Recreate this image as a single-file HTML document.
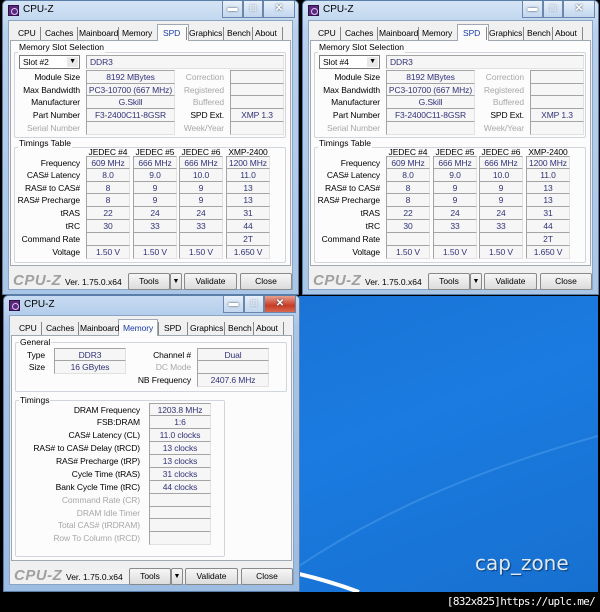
<!DOCTYPE html>
<html><head><meta charset="utf-8"><style>
*{margin:0;padding:0;box-sizing:border-box}
body{width:600px;height:612px;background:#000;position:relative;overflow:hidden;font-family:"Liberation Sans",sans-serif;font-size:8.5px}
.w{position:absolute;width:300px;height:296px}
.fr{position:absolute;left:2px;top:0;width:297px;height:295px;background:linear-gradient(#d4e4f5,#b8d0eb 30px,#aac6e6);border:1px solid #5a7ea8;border-radius:5px 5px 0 0}
.cl{position:absolute;left:8px;top:20px;width:285px;height:270px;background:#f0f0f0;border:1px solid #8aa4c4}
.pn{position:absolute;left:10px;top:40px;width:281px;height:226px;background:#fcfcfc;border:1px solid #a0a8b4}
.g{position:absolute;border:1px solid #d0d6dc;border-radius:2px}
.gl{position:absolute;background:#fcfcfc;padding:0 1px;font-size:8.5px;line-height:11px;color:#000}
.t{position:absolute;font-size:8.5px;line-height:14px;height:14px;white-space:nowrap;color:#000;letter-spacing:-0.1px}
.r{text-align:right}
.d{color:#a8a8a8}
.b{position:absolute;height:14px;border:1px solid;border-color:#a4a4a4 #e2e2e2 #e2e2e2 #a4a4a4;background:#f6f6f6;color:#32327a;text-align:center;font-size:8.5px;line-height:12px;white-space:nowrap;letter-spacing:-0.1px;overflow:hidden}
.tab{position:absolute;top:27px;font-size:8.5px;line-height:12px;color:#000;letter-spacing:-0.1px}
.sep{position:absolute;top:27px;width:1px;height:13px;background:#888}
.act{position:absolute;top:24px;height:17px;background:#fcfcfc;border:1px solid #a0a8b4;border-bottom:none}
.btn{position:absolute;top:273px;height:17px;border:1px solid #8a8a8a;background:linear-gradient(#f6f6f6,#dcdcdc);font-size:8.5px;line-height:15px;text-align:center;border-radius:2px}
.ttl{position:absolute;left:23px;top:4px;font-size:10px;color:#000}
.ico{position:absolute;left:8px;top:5px;width:11px;height:11px;background:#5a2a7a;border:1px solid #30104a}
.ico:after{content:"";position:absolute;left:2px;top:2px;width:5px;height:5px;border-radius:50%;border:1px solid #e0c0ff}
.cb{position:absolute;top:1px;height:17px;border:1px solid #6a86aa;border-top:none;background:linear-gradient(#e8f0fa,#c2d6ee);font-size:10px;text-align:center;line-height:15px;color:#fff;font-weight:bold;text-shadow:0 0 2px #345}
.logo{position:absolute;left:13px;top:272px;font-size:15px;font-style:italic;color:#a0a0a0;font-weight:bold;letter-spacing:0.5px}
.ver{position:absolute;left:65px;top:277px;font-size:8.5px}
</style></head><body>

<div style="position:absolute;left:299px;top:296px;width:299px;height:296px;background:linear-gradient(160deg,#1a74d6,#1b7be0 40%,#1670d0);overflow:hidden">
<svg width="299" height="296" style="position:absolute;left:0;top:0"><path d="M0 270 Q120 190 299 140" stroke="#5aa8f0" stroke-width="2" fill="none" opacity="0.4"/><path d="M0 278 Q30 285 60 296" stroke="#fff" stroke-width="4" fill="none"/></svg>
<div style="position:absolute;left:176px;top:255px;font-size:20px;color:#dfe8f4;font-family:'DejaVu Sans',sans-serif;text-shadow:1px 1px 1px #0a3a70">cap_zone</div>
</div>
<div style="position:absolute;right:5px;top:595px;font-size:11px;color:#fff;font-family:'DejaVu Sans Mono',monospace;letter-spacing:-0.7px">[832x825]https://uplc.me/</div>

<div class="w" style="left:0;top:0">
<div class="fr"></div><div class="ico"></div><div class="ttl">CPU-Z</div>
<div class="cb" style="left:222px;width:21px">&#9644;</div><div class="cb" style="left:243px;width:20px">&#9633;</div><div class="cb" style="left:263px;width:32px">&#10005;</div>
<div class="cl"></div>
<div class="pn"></div>
<div class="act" style="left:157px;width:32px"></div>
<div class="tab" style="left:18px">CPU</div><div class="sep" style="left:40px"></div><div class="tab" style="left:45px">Caches</div><div class="sep" style="left:77px"></div><div class="tab" style="left:79px">Mainboard</div><div class="sep" style="left:118px"></div><div class="tab" style="left:122px">Memory</div><div class="tab" style="left:163px;color:#1a3aa8">SPD</div><div class="sep" style="left:186px"></div><div class="tab" style="left:189px">Graphics</div><div class="sep" style="left:223px"></div><div class="tab" style="left:227px">Bench</div><div class="sep" style="left:252px"></div><div class="tab" style="left:255px">About</div><div class="sep" style="left:282px"></div>
<div class="g" style="left:14px;top:52px;width:272px;height:86px"></div><div class="gl" style="left:18px;top:42px">Memory Slot Selection</div>
<div class="b" style="left:19px;top:55px;width:61px;text-align:left;padding-left:3px;color:#000;background:#fff;border-color:#7a7a7a">Slot #2<span style="position:absolute;right:1px;top:1px;width:11px;height:10px;background:#e8e8e8;font-size:7px;line-height:10px;text-align:center">&#9660;</span></div>
<div class="b" style="left:86px;top:55px;width:198px;text-align:left;padding-left:3px">DDR3</div>
<div class="t r" style="left:0;width:80px;top:70px">Module Size</div><div class="b" style="left:86px;top:70px;width:89px">8192 MBytes</div>
<div class="t r" style="left:0;width:80px;top:83px">Max Bandwidth</div><div class="b" style="left:86px;top:83px;width:89px">PC3-10700 (667 MHz)</div>
<div class="t r" style="left:0;width:80px;top:95px">Manufacturer</div><div class="b" style="left:86px;top:95px;width:89px">G.Skill</div>
<div class="t r" style="left:0;width:80px;top:108px">Part Number</div><div class="b" style="left:86px;top:108px;width:89px">F3-2400C11-8GSR</div>
<div class="t r d" style="left:0;width:80px;top:121px">Serial Number</div><div class="b" style="left:86px;top:121px;width:89px"></div>
<div class="t r d" style="left:170px;width:54px;top:70px">Correction</div><div class="b" style="left:230px;top:70px;width:54px"></div>
<div class="t r d" style="left:170px;width:54px;top:83px">Registered</div><div class="b" style="left:230px;top:83px;width:54px"></div>
<div class="t r d" style="left:170px;width:54px;top:95px">Buffered</div><div class="b" style="left:230px;top:95px;width:54px"></div>
<div class="t r" style="left:170px;width:54px;top:108px">SPD Ext.</div><div class="b" style="left:230px;top:108px;width:54px">XMP 1.3</div>
<div class="t r d" style="left:170px;width:54px;top:121px">Week/Year</div><div class="b" style="left:230px;top:121px;width:54px"></div>
<div class="g" style="left:14px;top:147px;width:272px;height:116px"></div><div class="gl" style="left:18px;top:138px">Timings Table</div>
<div class="t" style="left:86px;width:44px;top:145px;text-align:center">JEDEC #4</div><div class="t" style="left:133px;width:44px;top:145px;text-align:center">JEDEC #5</div><div class="t" style="left:179px;width:44px;top:145px;text-align:center">JEDEC #6</div><div class="t" style="left:226px;width:44px;top:145px;text-align:center">XMP-2400</div>
<div class="t r" style="left:0;width:80px;top:156px">Frequency</div><div class="b" style="left:86px;top:156px;width:44px">609 MHz</div><div class="b" style="left:133px;top:156px;width:44px">666 MHz</div><div class="b" style="left:179px;top:156px;width:44px">666 MHz</div><div class="b" style="left:226px;top:156px;width:44px">1200 MHz</div>
<div class="t r" style="left:0;width:80px;top:168px">CAS# Latency</div><div class="b" style="left:86px;top:168px;width:44px">8.0</div><div class="b" style="left:133px;top:168px;width:44px">9.0</div><div class="b" style="left:179px;top:168px;width:44px">10.0</div><div class="b" style="left:226px;top:168px;width:44px">11.0</div>
<div class="t r" style="left:0;width:80px;top:181px">RAS# to CAS#</div><div class="b" style="left:86px;top:181px;width:44px">8</div><div class="b" style="left:133px;top:181px;width:44px">9</div><div class="b" style="left:179px;top:181px;width:44px">9</div><div class="b" style="left:226px;top:181px;width:44px">13</div>
<div class="t r" style="left:0;width:80px;top:193px">RAS# Precharge</div><div class="b" style="left:86px;top:193px;width:44px">8</div><div class="b" style="left:133px;top:193px;width:44px">9</div><div class="b" style="left:179px;top:193px;width:44px">9</div><div class="b" style="left:226px;top:193px;width:44px">13</div>
<div class="t r" style="left:0;width:80px;top:206px">tRAS</div><div class="b" style="left:86px;top:206px;width:44px">22</div><div class="b" style="left:133px;top:206px;width:44px">24</div><div class="b" style="left:179px;top:206px;width:44px">24</div><div class="b" style="left:226px;top:206px;width:44px">31</div>
<div class="t r" style="left:0;width:80px;top:219px">tRC</div><div class="b" style="left:86px;top:219px;width:44px">30</div><div class="b" style="left:133px;top:219px;width:44px">33</div><div class="b" style="left:179px;top:219px;width:44px">33</div><div class="b" style="left:226px;top:219px;width:44px">44</div>
<div class="t r" style="left:0;width:80px;top:232px">Command Rate</div><div class="b" style="left:86px;top:232px;width:44px"></div><div class="b" style="left:133px;top:232px;width:44px"></div><div class="b" style="left:179px;top:232px;width:44px"></div><div class="b" style="left:226px;top:232px;width:44px">2T</div>
<div class="t r" style="left:0;width:80px;top:245px">Voltage</div><div class="b" style="left:86px;top:245px;width:44px">1.50 V</div><div class="b" style="left:133px;top:245px;width:44px">1.50 V</div><div class="b" style="left:179px;top:245px;width:44px">1.50 V</div><div class="b" style="left:226px;top:245px;width:44px">1.650 V</div>
<div class="logo">CPU-Z</div><div class="ver">Ver. 1.75.0.x64</div>
<div class="btn" style="left:128px;width:42px">Tools</div><div class="btn" style="left:170px;width:12px;font-size:7px">&#9660;</div><div class="btn" style="left:184px;width:53px">Validate</div><div class="btn" style="left:240px;width:52px">Close</div>
</div>

<div class="w" style="left:300px;top:0">
<div class="fr"></div><div class="ico"></div><div class="ttl">CPU-Z</div>
<div class="cb" style="left:222px;width:21px">&#9644;</div><div class="cb" style="left:243px;width:20px">&#9633;</div><div class="cb" style="left:263px;width:32px">&#10005;</div>
<div class="cl"></div>
<div class="pn"></div>
<div class="act" style="left:157px;width:32px"></div>
<div class="tab" style="left:18px">CPU</div><div class="sep" style="left:40px"></div><div class="tab" style="left:45px">Caches</div><div class="sep" style="left:77px"></div><div class="tab" style="left:79px">Mainboard</div><div class="sep" style="left:118px"></div><div class="tab" style="left:122px">Memory</div><div class="tab" style="left:163px;color:#1a3aa8">SPD</div><div class="sep" style="left:186px"></div><div class="tab" style="left:189px">Graphics</div><div class="sep" style="left:223px"></div><div class="tab" style="left:227px">Bench</div><div class="sep" style="left:252px"></div><div class="tab" style="left:255px">About</div><div class="sep" style="left:282px"></div>
<div class="g" style="left:14px;top:52px;width:272px;height:86px"></div><div class="gl" style="left:18px;top:42px">Memory Slot Selection</div>
<div class="b" style="left:19px;top:55px;width:61px;text-align:left;padding-left:3px;color:#000;background:#fff;border-color:#7a7a7a">Slot #4<span style="position:absolute;right:1px;top:1px;width:11px;height:10px;background:#e8e8e8;font-size:7px;line-height:10px;text-align:center">&#9660;</span></div>
<div class="b" style="left:86px;top:55px;width:198px;text-align:left;padding-left:3px">DDR3</div>
<div class="t r" style="left:0;width:80px;top:70px">Module Size</div><div class="b" style="left:86px;top:70px;width:89px">8192 MBytes</div>
<div class="t r" style="left:0;width:80px;top:83px">Max Bandwidth</div><div class="b" style="left:86px;top:83px;width:89px">PC3-10700 (667 MHz)</div>
<div class="t r" style="left:0;width:80px;top:95px">Manufacturer</div><div class="b" style="left:86px;top:95px;width:89px">G.Skill</div>
<div class="t r" style="left:0;width:80px;top:108px">Part Number</div><div class="b" style="left:86px;top:108px;width:89px">F3-2400C11-8GSR</div>
<div class="t r d" style="left:0;width:80px;top:121px">Serial Number</div><div class="b" style="left:86px;top:121px;width:89px"></div>
<div class="t r d" style="left:170px;width:54px;top:70px">Correction</div><div class="b" style="left:230px;top:70px;width:54px"></div>
<div class="t r d" style="left:170px;width:54px;top:83px">Registered</div><div class="b" style="left:230px;top:83px;width:54px"></div>
<div class="t r d" style="left:170px;width:54px;top:95px">Buffered</div><div class="b" style="left:230px;top:95px;width:54px"></div>
<div class="t r" style="left:170px;width:54px;top:108px">SPD Ext.</div><div class="b" style="left:230px;top:108px;width:54px">XMP 1.3</div>
<div class="t r d" style="left:170px;width:54px;top:121px">Week/Year</div><div class="b" style="left:230px;top:121px;width:54px"></div>
<div class="g" style="left:14px;top:147px;width:272px;height:116px"></div><div class="gl" style="left:18px;top:138px">Timings Table</div>
<div class="t" style="left:86px;width:44px;top:145px;text-align:center">JEDEC #4</div><div class="t" style="left:133px;width:44px;top:145px;text-align:center">JEDEC #5</div><div class="t" style="left:179px;width:44px;top:145px;text-align:center">JEDEC #6</div><div class="t" style="left:226px;width:44px;top:145px;text-align:center">XMP-2400</div>
<div class="t r" style="left:0;width:80px;top:156px">Frequency</div><div class="b" style="left:86px;top:156px;width:44px">609 MHz</div><div class="b" style="left:133px;top:156px;width:44px">666 MHz</div><div class="b" style="left:179px;top:156px;width:44px">666 MHz</div><div class="b" style="left:226px;top:156px;width:44px">1200 MHz</div>
<div class="t r" style="left:0;width:80px;top:168px">CAS# Latency</div><div class="b" style="left:86px;top:168px;width:44px">8.0</div><div class="b" style="left:133px;top:168px;width:44px">9.0</div><div class="b" style="left:179px;top:168px;width:44px">10.0</div><div class="b" style="left:226px;top:168px;width:44px">11.0</div>
<div class="t r" style="left:0;width:80px;top:181px">RAS# to CAS#</div><div class="b" style="left:86px;top:181px;width:44px">8</div><div class="b" style="left:133px;top:181px;width:44px">9</div><div class="b" style="left:179px;top:181px;width:44px">9</div><div class="b" style="left:226px;top:181px;width:44px">13</div>
<div class="t r" style="left:0;width:80px;top:193px">RAS# Precharge</div><div class="b" style="left:86px;top:193px;width:44px">8</div><div class="b" style="left:133px;top:193px;width:44px">9</div><div class="b" style="left:179px;top:193px;width:44px">9</div><div class="b" style="left:226px;top:193px;width:44px">13</div>
<div class="t r" style="left:0;width:80px;top:206px">tRAS</div><div class="b" style="left:86px;top:206px;width:44px">22</div><div class="b" style="left:133px;top:206px;width:44px">24</div><div class="b" style="left:179px;top:206px;width:44px">24</div><div class="b" style="left:226px;top:206px;width:44px">31</div>
<div class="t r" style="left:0;width:80px;top:219px">tRC</div><div class="b" style="left:86px;top:219px;width:44px">30</div><div class="b" style="left:133px;top:219px;width:44px">33</div><div class="b" style="left:179px;top:219px;width:44px">33</div><div class="b" style="left:226px;top:219px;width:44px">44</div>
<div class="t r" style="left:0;width:80px;top:232px">Command Rate</div><div class="b" style="left:86px;top:232px;width:44px"></div><div class="b" style="left:133px;top:232px;width:44px"></div><div class="b" style="left:179px;top:232px;width:44px"></div><div class="b" style="left:226px;top:232px;width:44px">2T</div>
<div class="t r" style="left:0;width:80px;top:245px">Voltage</div><div class="b" style="left:86px;top:245px;width:44px">1.50 V</div><div class="b" style="left:133px;top:245px;width:44px">1.50 V</div><div class="b" style="left:179px;top:245px;width:44px">1.50 V</div><div class="b" style="left:226px;top:245px;width:44px">1.650 V</div>
<div class="logo">CPU-Z</div><div class="ver">Ver. 1.75.0.x64</div>
<div class="btn" style="left:128px;width:42px">Tools</div><div class="btn" style="left:170px;width:12px;font-size:7px">&#9660;</div><div class="btn" style="left:184px;width:53px">Validate</div><div class="btn" style="left:240px;width:52px">Close</div>
</div>

<div class="w" style="left:1px;top:295px;height:298px">
<div class="fr" style="height:297px;background:linear-gradient(#c8dcf2,#a8c4e6 30px,#9cbce2)"></div><div class="ico"></div><div class="ttl">CPU-Z</div>
<div class="cb" style="left:222px;width:21px">&#9644;</div><div class="cb" style="left:243px;width:20px">&#9633;</div><div class="cb" style="left:263px;width:32px;background:linear-gradient(#e8a090,#c83a24 60%,#d86a50)">&#10005;</div>
<div class="cl"></div>
<div class="pn"></div>
<div class="act" style="left:117px;width:40px"></div>
<div class="tab" style="left:18px">CPU</div><div class="sep" style="left:40px"></div><div class="tab" style="left:45px">Caches</div><div class="sep" style="left:77px"></div><div class="tab" style="left:79px">Mainboard</div><div class="tab" style="left:122px;color:#1a3aa8">Memory</div><div class="sep" style="left:157px"></div><div class="tab" style="left:163px">SPD</div><div class="sep" style="left:186px"></div><div class="tab" style="left:189px">Graphics</div><div class="sep" style="left:223px"></div><div class="tab" style="left:227px">Bench</div><div class="sep" style="left:252px"></div><div class="tab" style="left:255px">About</div><div class="sep" style="left:282px"></div>
<div class="g" style="left:14px;top:47px;width:272px;height:50px"></div><div class="gl" style="left:18px;top:42px">General</div>
<div class="t r" style="left:0;width:44px;top:53px">Type</div><div class="b" style="left:53px;top:53px;width:72px">DDR3</div>
<div class="t r" style="left:0;width:44px;top:65px">Size</div><div class="b" style="left:53px;top:65px;width:72px">16 GBytes</div>
<div class="t r" style="left:120px;width:70px;top:53px">Channel #</div><div class="b" style="left:196px;top:53px;width:72px">Dual</div>
<div class="t r d" style="left:120px;width:70px;top:65px">DC Mode</div><div class="b" style="left:196px;top:65px;width:72px"></div>
<div class="t r" style="left:120px;width:70px;top:78px">NB Frequency</div><div class="b" style="left:196px;top:78px;width:72px">2407.6 MHz</div>
<div class="g" style="left:14px;top:105px;width:210px;height:157px"></div><div class="gl" style="left:18px;top:100px">Timings</div>
<div class="t r" style="left:0;width:139px;top:108px">DRAM Frequency</div><div class="b" style="left:148px;top:108px;width:62px">1203.8 MHz</div>
<div class="t r" style="left:0;width:139px;top:120px">FSB:DRAM</div><div class="b" style="left:148px;top:120px;width:62px">1:6</div>
<div class="t r" style="left:0;width:139px;top:133px">CAS# Latency (CL)</div><div class="b" style="left:148px;top:133px;width:62px">11.0 clocks</div>
<div class="t r" style="left:0;width:139px;top:146px">RAS# to CAS# Delay (tRCD)</div><div class="b" style="left:148px;top:146px;width:62px">13 clocks</div>
<div class="t r" style="left:0;width:139px;top:159px">RAS# Precharge (tRP)</div><div class="b" style="left:148px;top:159px;width:62px">13 clocks</div>
<div class="t r" style="left:0;width:139px;top:172px">Cycle Time (tRAS)</div><div class="b" style="left:148px;top:172px;width:62px">31 clocks</div>
<div class="t r" style="left:0;width:139px;top:185px">Bank Cycle Time (tRC)</div><div class="b" style="left:148px;top:185px;width:62px">44 clocks</div>
<div class="t r d" style="left:0;width:139px;top:198px">Command Rate (CR)</div><div class="b" style="left:148px;top:198px;width:62px"></div>
<div class="t r d" style="left:0;width:139px;top:211px">DRAM Idle Timer</div><div class="b" style="left:148px;top:211px;width:62px"></div>
<div class="t r d" style="left:0;width:139px;top:223px">Total CAS# (tRDRAM)</div><div class="b" style="left:148px;top:223px;width:62px"></div>
<div class="t r d" style="left:0;width:139px;top:236px">Row To Column (tRCD)</div><div class="b" style="left:148px;top:236px;width:62px"></div>
<div class="logo">CPU-Z</div><div class="ver">Ver. 1.75.0.x64</div>
<div class="btn" style="left:128px;width:42px">Tools</div><div class="btn" style="left:170px;width:12px;font-size:7px">&#9660;</div><div class="btn" style="left:184px;width:53px">Validate</div><div class="btn" style="left:240px;width:52px">Close</div>
</div>
</body></html>
